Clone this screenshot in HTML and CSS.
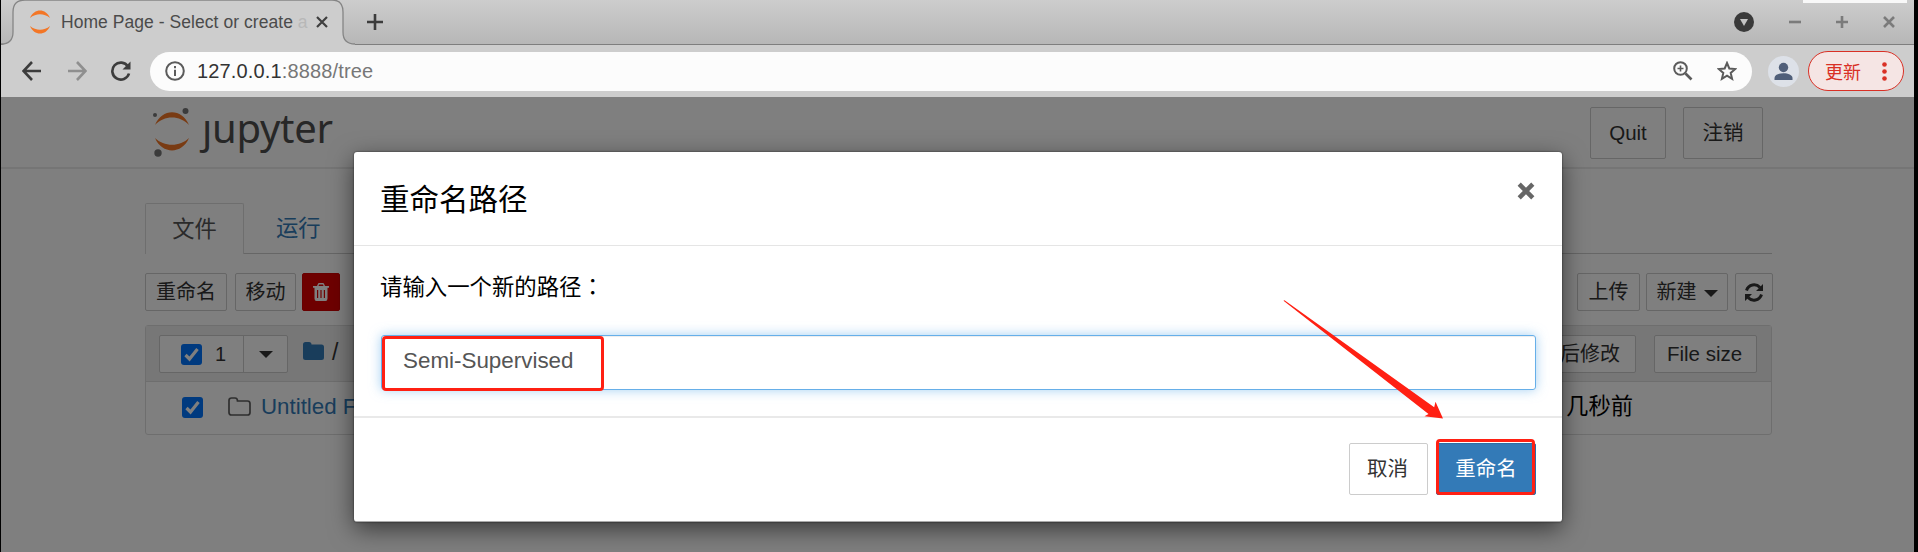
FILE: index.html
```html
<!DOCTYPE html>
<html lang="zh-CN">
<head>
<meta charset="utf-8">
<title>Home Page - Select or create a notebook</title>
<link rel="stylesheet" href="styles.css">
</head>
<body>
<div class="window">
  <div class="titlebar">
    <svg class="tab-shape" width="355" height="45" viewBox="0 0 355 45"><path class="tab-fill" d="M0 45H1Q12 43 12 32V12Q12 0 24 0H331Q342 0 342 12V32Q342 44 354 44V45Z"/><path class="tab-line" d="M0 44Q12 44 12 32V12Q12 0 24 0H331Q342 0 342 12V32Q342 44 354 44"/></svg>
    <div class="tab">
      <svg class="favicon" width="22" height="24" viewBox="0 0 22 24" fill="#f37626"><path d="M1 8C5-2 17-2 21 8C15 3 7 3 1 8Z"/><path d="M1 16C5 26 17 26 21 16C15 21 7 21 1 16Z"/></svg>
      <span class="tab-title">Home Page - Select or create <i>a</i></span>
      <svg class="tab-close" width="12" height="12" viewBox="0 0 12 12"><path d="M1 1L11 11M11 1L1 11"/></svg>
    </div>
    <svg class="new-tab" width="18" height="18" viewBox="0 0 18 18"><path d="M9 1V17M1 9H17"/></svg>
    <div class="window-controls">
      <svg width="20" height="20" viewBox="0 0 20 20"><circle cx="10" cy="10" r="10" fill="#3a3a3a"/><path d="M6 7H14L10 14Z" fill="#c4c4c4"/></svg>
      <svg width="12" height="12" viewBox="0 0 12 12"><path d="M0 6H12"/></svg>
      <svg width="12" height="12" viewBox="0 0 12 12"><path d="M0 6H12M6 0V12"/></svg>
      <svg width="12" height="12" viewBox="0 0 12 12"><path d="M1 1L11 11M11 1L1 11"/></svg>
    </div>
    <div class="top-strip"></div>
  </div>
  <div class="navbar">
    <svg class="nav-icon" width="20" height="20" viewBox="0 0 20 20"><path d="M19 10H2M10 1L1.500 10L10 19"/></svg>
    <svg class="nav-icon forward" width="20" height="20" viewBox="0 0 20 20"><path d="M1 10H18M10 1L18.500 10L10 19"/></svg>
    <svg class="nav-icon" width="20" height="20" viewBox="0 0 20 20"><path d="M17 5.500A8.500 8.500 0 1 0 18 12.500"/><path d="M19.500 .5V8.500H11.500Z" fill="#3c3c3c" stroke="none"/></svg>
    <div class="urlbar">
      <svg class="info" width="20" height="20" viewBox="0 0 20 20"><circle cx="10" cy="10" r="8.800"/><path d="M10 8.700V15M10 5V7.300"/></svg>
      <span class="url"><b>127.0.0.1</b>:8888/tree</span>
      <svg class="zoom-icon" width="20" height="20" viewBox="0 0 20 20"><circle cx="7.500" cy="7.500" r="6.300"/><path d="M12.500 12.500L18.500 18.500" stroke-width="2.600"/><path d="M4.500 7.500H10.500M7.500 4.500V10.500" stroke-width="1.600"/></svg>
      <svg class="star" width="20" height="20" viewBox="0 0 20 20"><path d="M10 2L12.300 7.500L18.300 8L13.700 11.900L15.100 17.800L10 14.700L4.900 17.800L6.300 11.900L1.700 8L7.700 7.500Z"/></svg>
    </div>
    <svg class="avatar" width="31" height="31" viewBox="0 0 31 31"><circle cx="15.500" cy="15.500" r="15.500" fill="#dde1e8"/><circle cx="15.500" cy="11.500" r="4.700" fill="#505f79"/><path d="M6.500 24V22C6.500 15.500 24.500 15.500 24.500 22V24Z" fill="#505f79"/></svg>
    <div class="update">更新<svg width="5" height="19" viewBox="0 0 5 19"><circle cx="2.500" cy="2.500" r="2.300"/><circle cx="2.500" cy="9.500" r="2.300"/><circle cx="2.500" cy="16.500" r="2.300"/></svg></div>
  </div>

  <div class="page">
    <div class="header">
      <div class="logo">
        <svg width="38" height="50" viewBox="0 0 38 50"><g fill="#f37726"><path d="M2 18C9 1 29 1 36 18C27 8 11 8 2 18Z"/><path d="M2 31C9 47.500 29 47.500 36 31C27 40 11 40 2 31Z"/></g><g fill="#767677"><circle cx="32.500" cy="4" r="3"/><circle cx="2" cy="8" r="2"/><circle cx="5" cy="46" r="3.700"/></g></svg>
        <span>ȷupyter</span>
      </div>
      <div class="header-buttons"><span class="btn">Quit</span><span class="btn logout">注销</span></div>
    </div>
    <div class="content">
      <div class="tabs"><span class="active">文件</span><span class="link">运行</span></div>
      <div class="toolbar">
        <div class="group left">
          <span class="btn sm rename">重命名</span><span class="btn sm move">移动</span>
          <span class="btn sm danger"><svg width="16" height="18" viewBox="0 0 16 18"><path fill="#fff" fill-rule="evenodd" d="M0 3H4L5 .7Q5.300 0 6 0H10Q10.700 0 11 .7L12 3H16V4.700H14.500V15.500Q14.500 18 12.500 18H3.500Q1.500 18 1.500 15.500V4.700H0ZM5.500 3H10.500L10 1.500H6ZM4 7V15H5.200V7ZM7.400 7V15H8.600V7ZM10.800 7V15H12V7Z"/></svg></span>
        </div>
        <div class="group right">
          <span class="btn sm upload">上传</span><span class="btn sm new">新建<i class="caret"></i></span>
          <span class="btn sm refresh"><svg width="20" height="19" viewBox="0 0 20 19"><path d="M2.500 7.500C4.500 1.200 12 .2 16 4.500M17.500 11.500C15.500 17.800 8 18.800 4 14.500" fill="none" stroke="#333" stroke-width="3"/><path d="M19 1V8H12ZM1 18V11H8Z" fill="#333"/></svg></span>
        </div>
      </div>
      <div class="list">
        <div class="list-head">
          <div class="select-group"><span class="select"><i class="check"><svg width="21" height="21" viewBox="0 0 21 21"><path d="M4.500 11L8.500 15L16.500 5"/></svg></i>1</span><span class="drop"><i class="caret"></i></span></div>
          <svg class="folder" width="21" height="18" viewBox="0 0 21 18"><path fill="#337ab7" d="M0 2.500Q0 0 2.500 0H6Q8.500 0 8.500 2.500H18.500Q21 2.500 21 5V15.500Q21 18 18.500 18H2.500Q0 18 0 15.500Z"/></svg>
          <span class="slash">/</span>
          <span class="btn sm modified">最后修改</span><span class="btn sm size">File size</span>
        </div>
        <div class="row">
          <i class="check"><svg width="21" height="21" viewBox="0 0 21 21"><path d="M4.500 11L8.500 15L16.500 5"/></svg></i>
          <svg class="folder-open" width="23" height="19" viewBox="0 0 23 19"><path fill="none" stroke="#5e5e5e" stroke-width="1.700" d="M1 3.500Q1 1 3.500 1H7Q9.500 1 9.500 4H19.500Q22 4 22 6.500V15.500Q22 18 19.500 18H3.500Q1 18 1 15.500Z"/></svg>
          <span class="name">Untitled Folder</span>
          <span class="time">几秒前</span>
        </div>
      </div>
    </div>
    <div class="backdrop"></div>
  </div>
</div>

<div class="modal">
  <div class="modal-head"><span>重命名路径</span><svg width="18" height="18" viewBox="0 0 18 18"><path d="M2.200 2.200L15.800 15.800M15.800 2.200L2.200 15.800"/></svg></div>
  <div class="modal-body"><p>请输入一个新的路径<span class="colon" lang="zh-TW">：</span></p><div class="input">Semi-Supervised</div></div>
  <div class="modal-foot"><span class="btn cancel">取消</span><span class="btn primary">重命名</span></div>
</div>
<div class="mark mark-input"></div>
<div class="mark mark-button"></div>
<svg class="arrow" width="162" height="122" viewBox="0 0 162 122"><path d="M.5 .8L1.500 .2L151.200 107.300L152.500 101.800L160 118.500L141.500 116.300L145.500 114Z"/></svg>
</body>
</html>
```
FILE: styles.css
```css
* { box-sizing: border-box; }
body {
  margin: 0;
  position: relative;
  width: 1918px;
  height: 552px;
  overflow: hidden;
  background: #000;
  font-family: "Liberation Sans", "Noto Sans CJK SC", sans-serif;
}
svg { display: block; flex: none; }
i { font-style: normal; }
.window { margin-left: 1px; width: 1913px; height: 552px; display: flex; flex-direction: column; overflow: hidden; }

/* browser chrome */
.titlebar {
  position: relative;
  flex: none;
  height: 45px;
  display: flex;
  align-items: center;
  padding-bottom: 1px;
  background: linear-gradient(#cdcdcd, #b7b7b7);
  border-bottom: 1px solid #7e7e7e;
}
.tab-shape { position: absolute; left: 0; top: 0; }
.tab-fill { fill: #cdcdcd; }
.tab-line { fill: none; stroke: #858585; stroke-width: 1.3; }
.tab { position: relative; width: 328px; padding-left: 28px; display: flex; align-items: center; }
.tab-title {
  width: 245px;
  margin-left: 10px;
  font: 17.5px/24px "Liberation Sans", sans-serif;
  letter-spacing: .05px;
  color: #4b4b4b;
  white-space: nowrap;
}
.tab-title i { color: #b8b8b8; }
.tab-close { margin-left: 10px; stroke: #3f3f3f; stroke-width: 2.2; }
.new-tab { margin-left: 37px; stroke: #3c3c3c; stroke-width: 2.6; }
.window-controls { margin-left: auto; margin-right: 19px; display: flex; align-items: center; gap: 35px; }
.window-controls svg { stroke: #7b7b7b; stroke-width: 2.6; }
.window-controls svg:first-child { stroke: none; }
.top-strip { position: absolute; left: 1802px; top: 0; width: 104px; height: 3px; background: #f8f8f8; }
.navbar { flex: none; height: 52px; display: flex; align-items: center; padding: 0 10px 0 21px; background: #cdcdcd; }
.nav-icon { margin-right: 24.5px; fill: none; stroke: #3c3c3c; stroke-width: 2.6; }
.nav-icon.forward { stroke: #8f8f8f; }
.urlbar {
  width: 1602px;
  height: 39px;
  margin-left: -5.5px;
  padding: 0 15px;
  display: flex;
  align-items: center;
  border-radius: 20px;
  background: #fcfcfc;
}
.urlbar svg { fill: none; stroke: #5b5b5b; stroke-width: 2; }
.url { margin-left: 12px; font: 20px/26px "Liberation Sans", sans-serif; color: #777; letter-spacing: .15px; }
.url b { font-weight: 400; color: #333; }
.urlbar .zoom-icon { margin-left: auto; }
.urlbar .star { margin-left: 24px; margin-right: 0; }
.avatar { margin-left: 16px; }
.update {
  width: 96px;
  height: 40px;
  margin-left: 9px;
  padding-left: 16px;
  display: flex;
  align-items: center;
  gap: 21px;
  border: 1.5px solid #d93025;
  border-radius: 20px;
  background: #f5e5e4;
  color: #d93025;
  font: 18px/24px "Noto Sans CJK SC", sans-serif;
  white-space: nowrap;
}
.update svg { fill: #d93025; }

/* notebook page */
.page { position: relative; flex: 1; background: #fff; overflow: hidden; }
.backdrop { position: absolute; inset: 0; background: rgba(0, 0, 0, .5); }
.header {
  height: 72px;
  padding: 10px 151px 0 152px;
  display: flex;
  justify-content: space-between;
  border-bottom: 2px solid #eaeaea;
}
.logo { display: flex; }
.logo span { margin-left: 11px; margin-top: -3px; font: 40px/48px "Noto Sans", sans-serif; letter-spacing: -.3px; color: #4e4e4e; }
.header-buttons { display: flex; gap: 17px; }
.btn {
  display: flex;
  align-items: center;
  justify-content: center;
  width: 76px;
  height: 52px;
  border: 1px solid #ccc;
  border-radius: 2px;
  background: #fff;
  color: #333;
  font-size: 20.5px;
  line-height: 30px;
  white-space: nowrap;
}
.logout { width: 80px; }
.btn.sm { height: 38px; font-size: 20px; line-height: 28px; }
.content { margin: 34px 0 0 144px; width: 1627px; }
.tabs { height: 51px; display: flex; border-bottom: 1px solid #ccc; font-size: 22.3px; line-height: 51px; }
.tabs span { height: 51px; text-align: center; }
.tabs .active { width: 99px; background: #fff; border: 1px solid #ddd; border-bottom: 0; border-radius: 2px 2px 0 0; color: #555; }
.tabs .link { margin-left: 32px; color: #337ab7; }
.toolbar { margin: 19px -1px 0 0; display: flex; justify-content: space-between; }
.group { display: flex; }
.btn.rename { width: 82px; }
.btn.move { width: 61px; margin-left: 8px; }
.btn.danger { width: 38px; margin-left: 6px; border-color: #d00000; background: #dc0000; }
.btn.upload { width: 63px; }
.btn.new { width: 82px; margin-left: 6px; }
.btn.refresh { width: 38px; margin-left: 7px; }
.caret { border: 7px solid transparent; border-top-color: #333; border-bottom: 0; }
.new .caret { margin-left: 7px; margin-top: 3px; }
.list { margin-top: 14px; border: 1px solid #ddd; border-radius: 3px; }
.list-head { height: 56px; display: flex; align-items: flex-start; padding: 9px 14px 0 13px; background: #eee; border-bottom: 1px solid #ddd; }
.select-group { width: 129px; height: 38px; display: flex; border: 1px solid #ccc; border-radius: 2px; background: #fff; color: #333; }
.select { width: 84px; padding-left: 21px; display: flex; align-items: center; gap: 13px; border-right: 1px solid #ccc; font-size: 20px; }
.drop { flex: 1; display: flex; align-items: center; justify-content: center; }
.check { width: 21px; height: 21px; border-radius: 3px; background: #0075ff; }
.check path { fill: none; stroke: #fff; stroke-width: 3.2; }
.folder { margin: 7px 0 0 15px; }
.slash { margin: 1px 0 0 8px; font-size: 23px; line-height: 32px; color: #333; }
.btn.modified { width: 104px; margin-left: auto; padding-right: 8px; }
.btn.size { width: 103px; margin-left: 18px; padding-right: 2px; font-size: 20.5px; }
.row { height: 52px; padding: 0 138px 2px 36px; display: flex; align-items: center; font-size: 22.3px; line-height: 32px; }
.folder-open { margin-left: 25px; margin-top: -2px; }
.name { margin-left: 10px; color: #337ab7; }
.time { margin-left: auto; color: #000; }

/* dialog */
.modal {
  position: absolute;
  left: 354px;
  top: 152px;
  width: 1208px;
  height: 370px;
  border-radius: 3px;
  background: #fff;
  border-bottom: 1px solid #aaa;
  box-shadow: 0 0 2px rgba(0, 0, 0, .7), 0 7px 24px rgba(0, 0, 0, .55);
  color: #000;
}
.modal-head { height: 94px; padding: 2px 27px 0 26px; display: flex; align-items: center; justify-content: space-between; border-bottom: 1px solid #e5e5e5; font-size: 29.5px; line-height: 42px; }
.modal-head svg { margin-top: -18px; fill: none; stroke: #666; stroke-width: 4.5; }
.modal-body { height: 172px; padding: 25px 26px 0 27px; border-bottom: 2px solid #e9e9e9; }
.modal-body p { height: 34px; margin: 0 0 0 -1px; font-size: 22.4px; line-height: 34px; }
.colon { font-family: "Noto Sans CJK TC", sans-serif; line-height: 1; }
.input {
  height: 55px;
  margin-top: 30px;
  padding-left: 21px;
  border: 1px solid #66afe9;
  border-radius: 3px;
  box-shadow: inset 0 1px 1px rgba(0, 0, 0, .075), 0 0 12px rgba(102, 175, 233, .6);
  color: #555;
  font-size: 22.4px;
  line-height: 49px;
}
.modal-foot { padding: 25px 26px 0; display: flex; justify-content: flex-end; gap: 8px; }
.btn.cancel { width: 79px; padding-right: 2px; }
.btn.primary { width: 100px; background: #337ab7; border-color: #2e6da4; color: #fff; }
.mark { position: absolute; border: 3px solid #ff2013; border-radius: 4px; }
.mark-input { left: 382px; top: 336px; width: 222px; height: 55px; }
.mark-button { left: 1436px; top: 439px; width: 99px; height: 56px; }
.arrow { position: absolute; left: 1283px; top: 300px; fill: #ff2013; }
```
